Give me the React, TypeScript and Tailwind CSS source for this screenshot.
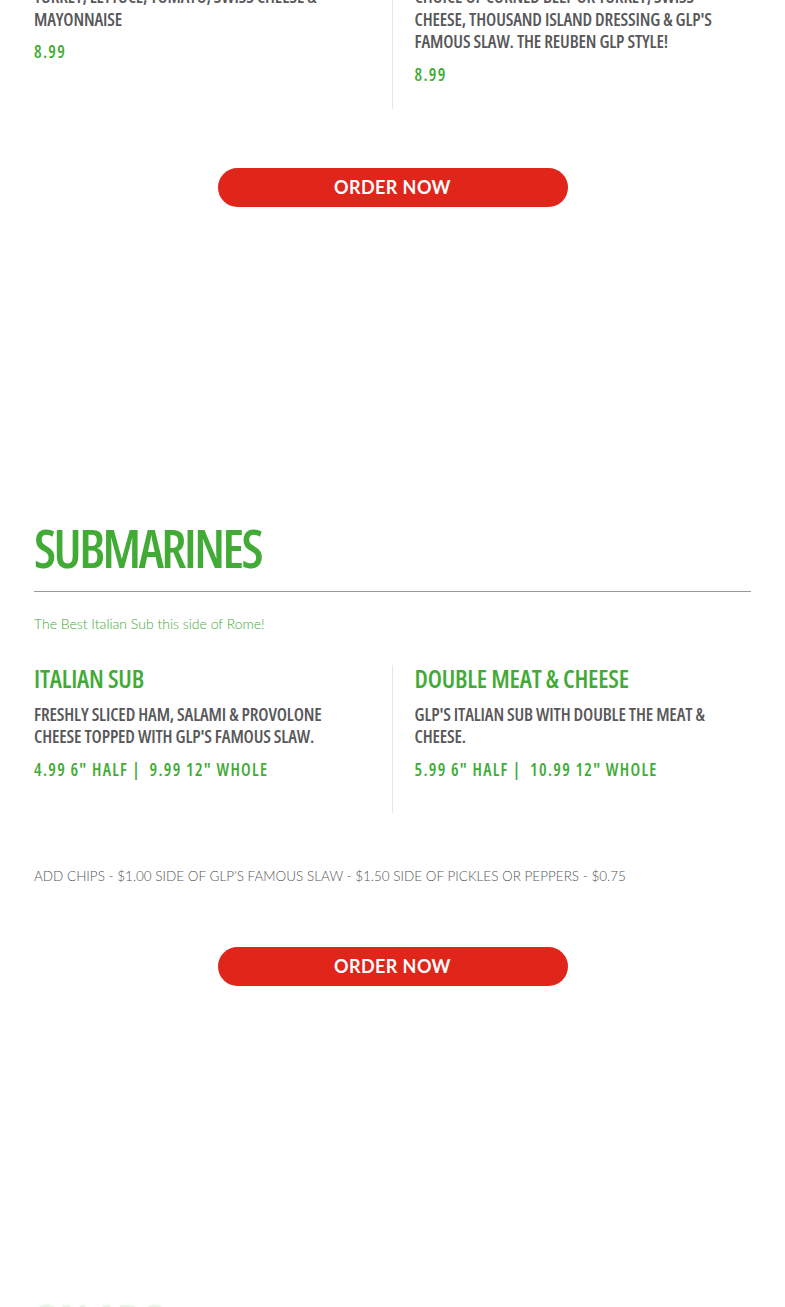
import React from "react";

const cond = "font-['Open_Sans',sans-serif] [font-stretch:75%]";

function Item({
  title,
  lines,
  price,
  left,
  pb,
}: {
  title?: string;
  lines: string[];
  price: string;
  left: boolean;
  pb: string;
}) {
  return (
    <div className={`${left ? "border-r border-[#e6e6e6] pr-[22px]" : "pl-[22px]"} ${pb}`}>
      {title && (
        <h3 className={`${cond} text-[25px] leading-[26px] font-semibold text-[#41ab36] tracking-[-0.2px]`}>{title}</h3>
      )}
      <p
        className={`${cond} ${title ? "mt-[12px]" : ""} text-[18px] leading-[22.5px] font-semibold text-[#58585a] tracking-[-0.15px]`}
      >
        {lines.map((l, i) => (
          <span key={i} className="block">
            {l}
          </span>
        ))}
      </p>
      <p className={`${cond} mt-[11px] text-[17px] leading-[22px] font-semibold text-[#41ab36] tracking-[1.3px] whitespace-pre`}>
        {price}
      </p>
    </div>
  );
}

function OrderButton() {
  return (
    <div className="flex justify-center">
      <button className="w-[350px] h-[39px] rounded-full bg-[#e0251b] text-white font-['Lato',sans-serif] font-bold text-[18px] tracking-[0.4px] leading-none">
        ORDER NOW
      </button>
    </div>
  );
}

export default function App() {
  return (
    <div className="w-[785px] h-[1307px] overflow-hidden bg-white">
      <div className="px-[34px]">
        {/* previous section tail */}
        <div className="-mt-[15px] grid grid-cols-2">
          <Item
            left
            lines={["TURKEY, LETTUCE, TOMATO, SWISS CHEESE &", "MAYONNAISE"]}
            price="8.99"
            pb="pb-[23px]"
          />
          <Item
            left={false}
            lines={[
              "CHOICE OF CORNED BEEF OR TURKEY, SWISS",
              "CHEESE, THOUSAND ISLAND DRESSING & GLP'S",
              "FAMOUS SLAW. THE REUBEN GLP STYLE!",
            ]}
            price="8.99"
            pb="pb-[23px]"
          />
        </div>
        <div className="mt-[59px]">
          <OrderButton />
        </div>

        {/* Submarines */}
        <section className="mt-[314px]">
          <h2 className={`${cond} text-[52px] leading-[53px] font-semibold text-[#41ab36] tracking-[-2.5px]`}>SUBMARINES</h2>
          <hr className="mt-[17px] border-0 h-px bg-[#999999]" />
          <p className="mt-[22px] font-['Lato',sans-serif] font-light text-[14px] leading-[20px] text-[#41ab36]">
            The Best Italian Sub this side of Rome!
          </p>
          <div className="mt-[31px] grid grid-cols-2">
            <Item
              left
              title="ITALIAN SUB"
              lines={["FRESHLY SLICED HAM, SALAMI & PROVOLONE", "CHEESE TOPPED WITH GLP'S FAMOUS SLAW."]}
              price={'4.99 6" HALF |  9.99 12" WHOLE'}
              pb="pb-[32px]"
            />
            <Item
              left={false}
              title="DOUBLE MEAT & CHEESE"
              lines={["GLP'S ITALIAN SUB WITH DOUBLE THE MEAT &", "CHEESE."]}
              price={'5.99 6" HALF |  10.99 12" WHOLE'}
              pb="pb-[32px]"
            />
          </div>
          <p className="mt-[53px] font-['Lato',sans-serif] font-light text-[13.5px] leading-[20px] text-[#555555]">
            ADD CHIPS - $1.00 SIDE OF GLP'S FAMOUS SLAW - $1.50 SIDE OF PICKLES OR PEPPERS - $0.75
          </p>
          <div className="mt-[61px]">
            <OrderButton />
          </div>
        </section>

        <section className="mt-[310px] opacity-10">
          <h2 className={`${cond} text-[52px] leading-[53px] font-semibold text-[#41ab36] tracking-[-2.5px]`}>SALADS</h2>
        </section>
      </div>
    </div>
  );
}
